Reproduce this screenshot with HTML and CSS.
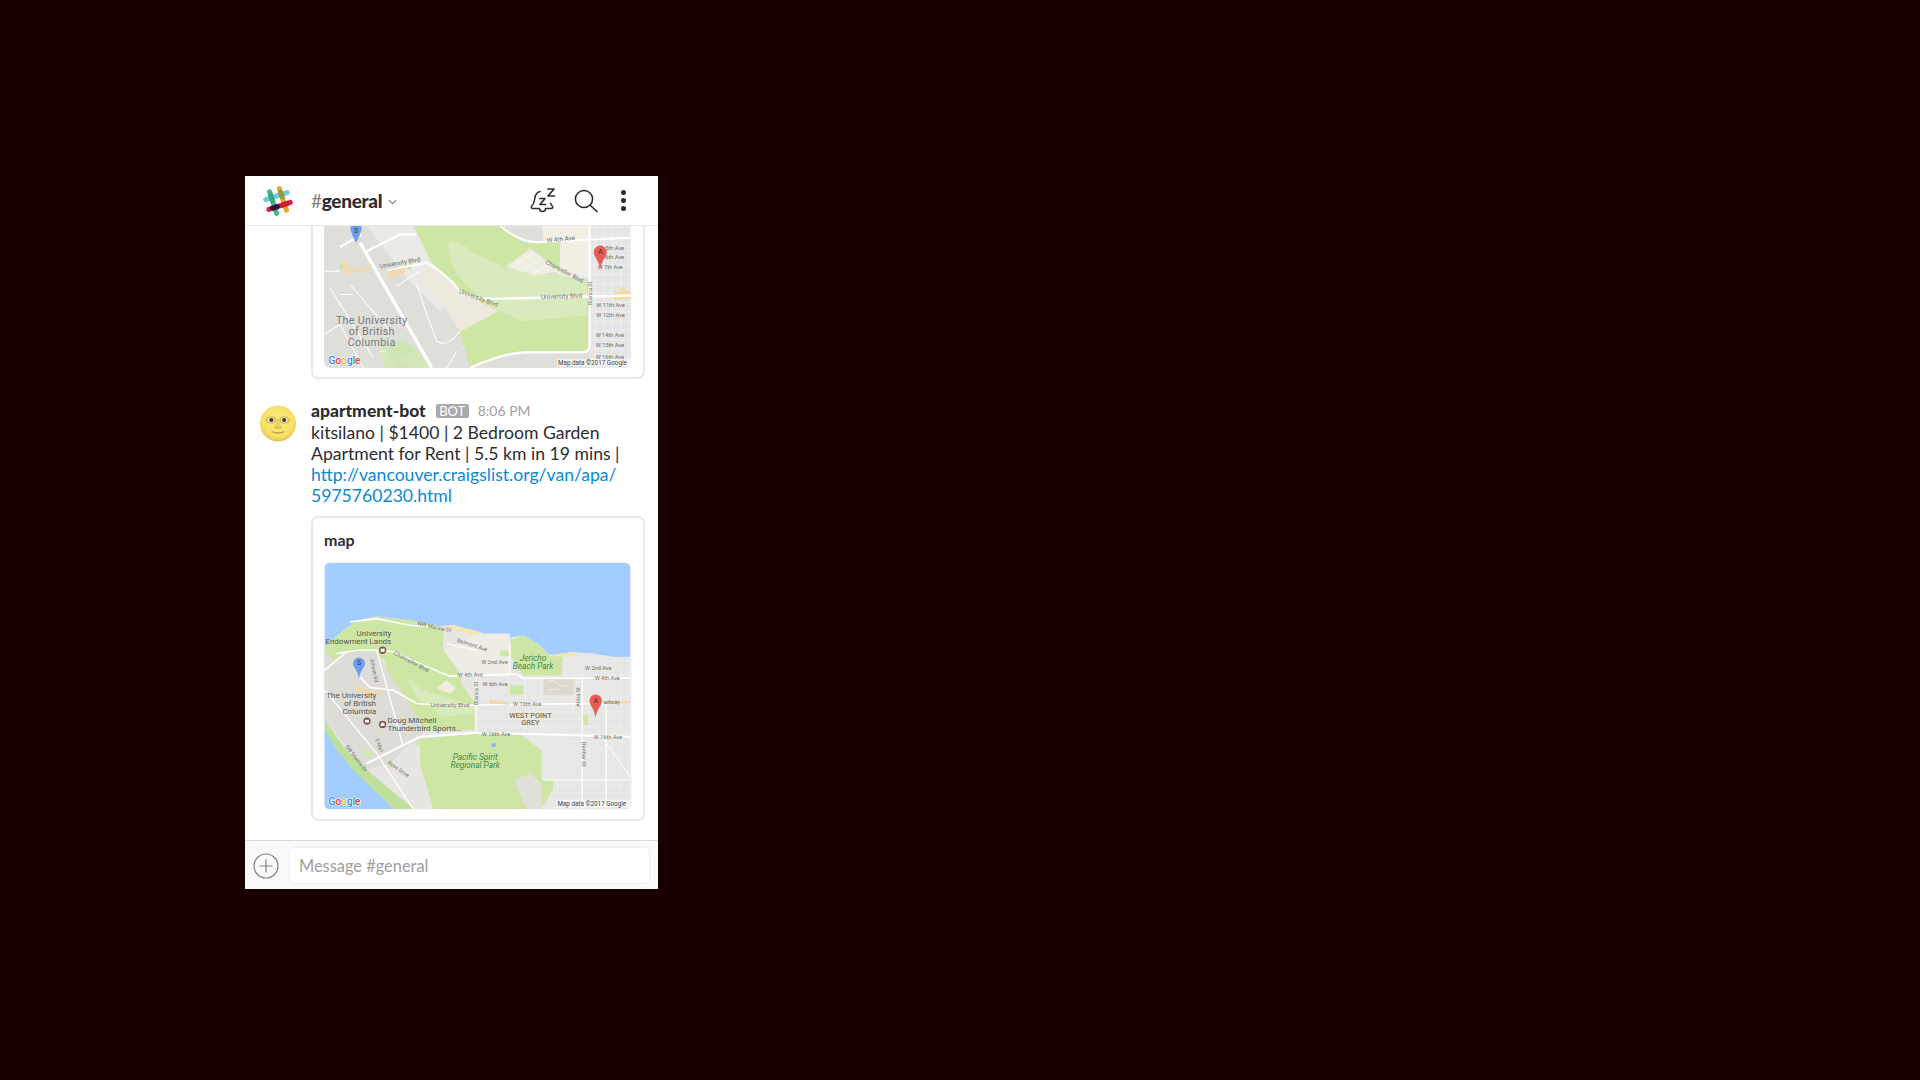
FILE: index.html
```html
<!DOCTYPE html>
<html lang="en">
<head>
  <meta charset="UTF-8">
  <title>#general</title>
  <link rel="stylesheet" href="styles.css">
</head>
<body>
  <div class="phone">
    <header class="topbar">
      <svg class="logo" viewBox="0 0 32 32" aria-hidden="true">
        <g transform="rotate(-18 16 16)" fill="none" stroke-width="5.4" stroke-linecap="round">
          <path d="M10.5 4v24" stroke="#3eb890"/>
          <path d="M21.5 4v24" stroke="#e8a723"/>
          <path d="M4 10.5h24" stroke="#70cadb"/>
          <path d="M4 21.5h24" stroke="#e01765"/>
          <path d="M10.5 7.8v5.4" stroke="#3aa583"/>
          <path d="M21.5 7.8v5.4" stroke="#8f9f3f"/>
          <path d="M8 21.5h5.4" stroke="#33143b"/>
          <path d="M19 21.5h5.4" stroke="#cc1f27"/>
        </g>
      </svg>
      <div class="channel"><span class="hash">#</span><b>general</b>
        <svg class="caret" viewBox="0 0 10 6"><path d="M1 1l4 4 4-4" fill="none" stroke="#777" stroke-width="1.2"/></svg>
      </div>
      <svg class="icon-snooze" viewBox="0 0 28 28" aria-hidden="true">
        <g fill="none" stroke="#2c2d30" stroke-width="1.5" stroke-linejoin="round" stroke-linecap="round">
          <path d="M10 4.500C6 5.500 5 8.500 4.700 12c-.3 3.500-1.200 5.500-3.200 7.500-.6.800-.2 2 1 2h7c0 4 6 4 6 0H21c1.800 0 2.400-1.300 1.200-2.600-.7-.8-1.300-1.600-1.700-2.600"/>
          <path d="M10 11.500h5l-5 6h5.500" stroke-width="1.700"/>
          <path d="M18 2h6l-6 7h6.500" stroke-width="1.700"/>
        </g>
      </svg>
      <svg class="icon-search" viewBox="0 0 24 24" aria-hidden="true">
        <circle cx="10" cy="10" r="8.600" fill="none" stroke="#2c2d30" stroke-width="1.500"/>
        <path d="M16.200 16.200l6.800 6.400" stroke="#2c2d30" stroke-width="1.500" stroke-linecap="round"/>
      </svg>
      <div class="dots"><i></i><i></i><i></i></div>
    </header>

    <main class="messages">
      <div class="card card-cut">
        <svg class="map map-top" viewBox="252 165 920 425" aria-hidden="true">
          <defs>
            <pattern id="blocks" width="26" height="28" patternUnits="userSpaceOnUse">
              <rect width="26" height="28" fill="#e5e5e5"/>
              <path d="M0 .8h26M25 0v28" stroke="#f5f5f5" stroke-width="2"/>
            </pattern>
          </defs>
          <rect x="252" y="165" width="920" height="425" fill="#dfdfda"/>
          <path d="M380 165H520L575 270 660 360 600 420 500 320Z" fill="#e9e9e6"/>
          <path d="M560 272L660 356 775 420 660 482 610 400 530 330Z" fill="#eee9df"/>
          <path d="M905 165H1050V320H960L915 250Z" fill="#f1eee4"/>
          <path d="M520 165H780L850 215H915L958 210 960 300 880 235 798 285 960 312 1044 335V535Q1044 543 1030 543H860Q790 545 690 590L660 482 775 420 660 358 572 270Z" fill="#cde6a4"/>
          <path d="M625 215Q650 200 700 245L800 290 960 312 1040 340V432L850 450 775 420 680 345Q620 280 625 215Z" fill="#d9ebbc"/>
          <path d="M798 287L870 232 958 300 885 312Z" fill="#efeee2"/>
          <path d="M820 285L880 245M850 295L900 262M880 305L925 280" stroke="#fff" stroke-width="2"/>
          <rect x="1048" y="165" width="124" height="425" fill="url(#blocks)"/>
          <path d="M1120 360h52v26h-52zM1140 348h14v12h-14z" fill="#f3d9a8"/>
          <path d="M430 590L420 520H520L575 590Z" fill="#d5e6bc"/>
          <g fill="none" stroke="#fff">
            <path d="M360 215L575 590" stroke-width="10"/>
            <path d="M300 228L365 190M380 240L480 190 530 190M440 300L560 275Q620 310 660 360 700 385 760 383L1172 373" stroke-width="7"/>
            <path d="M780 165Q840 215 900 213L1172 200" stroke-width="6"/>
            <path d="M690 590Q790 545 860 543H1030Q1048 543 1048 520V165" stroke-width="7"/>
            <path d="M252 300H300M270 350L400 560M340 370H300M330 340L450 480M252 490L300 460 370 590M530 340L560 430 590 510Q620 530 650 490L660 480M470 345L540 300M620 590L650 540M420 540H520" stroke-width="3"/>
          </g>
          <path d="M300 270h20l10 25 65-15v10l-70 20H310zM440 300l60-12-10 20-40 18z" fill="#f0d9b5"/>
          <path d="M500 292l15-10-5 14zM295 290l10-10 5 12z" fill="#bfe096"/>
          <path d="M430 530l60-25 35 35-60 35zM470 575h40v15h-40z" fill="#cfe5b5"/>
          <g class="road-text">
            <text x="420" y="292" transform="rotate(-10 420 292)" font-size="19">University Blvd</text>
            <text x="655" y="365" transform="rotate(20 655 365)" font-size="19">University Blvd</text>
            <text x="902" y="384" transform="rotate(-2 902 384)" font-size="19">University Blvd</text>
            <text x="920" y="215" transform="rotate(-6 920 215)" font-size="19">W 4th Ave</text>
            <text x="915" y="277" transform="rotate(28 915 277)" font-size="18">Chancellor Blvd</text>
            <text x="1055" y="402" transform="rotate(-90 1055 402)" font-size="17">Blanca St</text>
            <text x="1095" y="237" font-size="17">5th Ave</text>
            <text x="1095" y="265" font-size="17">6th Ave</text>
            <text x="1072" y="293" font-size="17">W 7th Ave</text>
            <text x="1068" y="408" font-size="17">W 11th Ave</text>
            <text x="1068" y="438" font-size="17">W 12th Ave</text>
            <text x="1066" y="497" font-size="17">W 14th Ave</text>
            <text x="1066" y="527" font-size="17">W 15th Ave</text>
            <text x="1066" y="562" font-size="17">W 16th Ave</text>
          </g>
          <g class="campus-text" font-size="32" text-anchor="middle">
            <text x="395" y="458">The University</text>
            <text x="395" y="491">of British</text>
            <text x="395" y="524">Columbia</text>
          </g>
          <path d="M331 178a17 17 0 1 1 34 0q-2 14-17 42-15-28-17-42z" transform="translate(0 -5)" fill="#6d9eee"/>
          <text x="348" y="185" class="pin-text" font-size="19">S</text>
          <path d="M1061 243a19 19 0 1 1 38 0c0 14-14 22-19 48-5-26-19-34-19-48z" fill="#ea5b55" stroke="#c94540" stroke-width="1"/>
          <text x="1080" y="250" class="pin-text" font-size="22">A</text>
          <text x="265" y="578" class="google" font-size="32"><tspan fill="#4285f4">G</tspan><tspan fill="#ea4335">o</tspan><tspan fill="#fbbc05">o</tspan><tspan fill="#4285f4">g</tspan><tspan fill="#34a853">l</tspan><tspan fill="#ea4335">e</tspan></text>
          <rect x="950" y="564" width="222" height="22" fill="#fff" fill-opacity=".6"/>
          <text x="953" y="581" class="attr" font-size="19">Map data ©2017 Google</text>
        </svg>
      </div>

      <article class="message">
        <svg class="avatar" viewBox="0 0 36 37" aria-hidden="true">
          <defs>
            <radialGradient id="moon" cx="50%" cy="42%" r="58%">
              <stop offset="0" stop-color="#fbeb85"/>
              <stop offset=".75" stop-color="#f6e166"/>
              <stop offset="1" stop-color="#e3c452"/>
            </radialGradient>
          </defs>
          <circle cx="18" cy="18.500" r="18" fill="url(#moon)"/>
          <ellipse cx="11" cy="15" rx="5.500" ry="3.800" fill="#d9c25c"/>
          <ellipse cx="24.500" cy="15" rx="5.500" ry="3.800" fill="#d9c25c"/>
          <ellipse cx="11" cy="15" rx="3.300" ry="2.300" fill="#efe9c8"/>
          <ellipse cx="24.500" cy="15" rx="3.300" ry="2.300" fill="#efe9c8"/>
          <circle cx="11.300" cy="15" r="2" fill="#3c383c"/>
          <circle cx="24.200" cy="15" r="2" fill="#3c383c"/>
          <path d="M16.500 14q-.5 6-2.500 8 4 2.500 8 0-2-2-2.500-8" fill="#ecd35c"/>
          <path d="M14 22q4 2.500 8 0" fill="none" stroke="#c4a73f" stroke-width="1"/>
          <path d="M11.500 26.500q6.500 3 13 0" fill="none" stroke="#bf9f3a" stroke-width="1.300"/>
        </svg>
        <div class="body">
          <div class="meta">
            <span class="author">apartment-bot</span>
            <span class="badge">BOT</span>
            <span class="time">8:06 PM</span>
          </div>
          <p class="text">kitsilano | $1400 | 2 Bedroom Garden<br>Apartment for Rent | 5.5 km in 19 mins |<br><a href="#">http://vancouver.craigslist.org/van/apa/<br>5975760230.html</a></p>
          <div class="card">
            <h2 class="card-title">map</h2>
            <svg class="map map-full" viewBox="44 38 918 739" aria-hidden="true">
              <defs>
                <pattern id="grid" width="24" height="22" patternUnits="userSpaceOnUse">
                  <rect width="24" height="22" fill="#e6e6e4"/>
                  <path d="M0 .8h24M23 0v22" stroke="#f3f3f3" stroke-width="1.800"/>
                </pattern>
              </defs>
              <rect x="44" y="38" width="918" height="739" fill="#a3ccff"/>
              <path d="M44 290L100 240 140 212 200 198 300 210 380 228 430 224 470 235 510 245 550 268 600 262 640 255 690 285 720 315 790 305 850 310 962 328V777H310L170 660 100 590 44 515Z" fill="#e7e6e2"/>
              <path d="M400 228L430 224 470 235 510 245 550 270 600 264 600 274 550 280 500 258 440 240Z" fill="#f3e6b4"/>
              <path d="M710 316L790 306 800 316 730 326Z" fill="#f3e6b4"/>
              <path d="M500 250H600V380H500L460 370 400 300Z" fill="#efece5"/>
              <rect x="500" y="380" width="462" height="397" fill="url(#grid)"/>
              <rect x="760" y="320" width="202" height="60" fill="url(#grid)"/>
              <path d="M44 290L100 240 140 212 200 198 300 210 400 228 400 300 450 370 455 400 495 460V540H340L325 590 240 490 225 330 190 305H100L80 335 44 310Z" fill="#cde6a4"/>
              <path d="M604 268L640 255 690 285 720 318 760 320 755 376 640 376 604 320Z" fill="#cde6a4"/>
              <path d="M290 380L340 420 440 450 495 465V490L400 500 320 440Z" fill="#d9ebbc"/>
              <path d="M380 415L410 390 440 415 420 430Z" fill="#efeee2"/>
              <path d="M44 310L80 335 100 305H200L225 350 300 460 340 540 325 580 300 580 240 640 170 660 44 510Z" fill="#dddcd7"/>
              <path d="M44 510L100 590 170 660 310 777H250L130 660 80 600 44 540Z" fill="#bfe09a"/>
              <path d="M44 540L80 600 130 660 250 777H44Z" fill="#a3ccff"/>
              <path d="M330 565L500 552H630L695 600V690H730V718L695 777H370L330 640Z" fill="#cde6a4"/>
              <path d="M612 690L660 670 695 700V777H650Z" fill="#dfe1d8"/>
              <path d="M814 495h22v30h-10zM600 405h40v28h-40zM570 300h28v18h-28z" fill="#cde6a4"/>
              <rect x="702" y="384" width="90" height="50" fill="#dcd8cc"/>
              <path d="M712 395q20-8 30 5t30 5M715 420q20-8 40 0" fill="none" stroke="#efece5" stroke-width="3"/>
              <rect x="545" y="580" width="14" height="10" fill="#86b8f5"/>
              <g fill="none" stroke="#fff">
                <path d="M120 215L200 205 300 225 400 232M80 310L140 300H215L250 305 340 345 420 378 620 372 640 385 962 383" stroke-width="5"/>
                <path d="M44 360L110 305M150 380L180 412 250 420 320 460 400 466 962 458" stroke-width="5"/>
                <path d="M170 640L330 560 500 548 962 560" stroke-width="6"/>
                <path d="M200 300L280 590M44 420L200 610 310 777" stroke-width="4"/>
                <path d="M498 380V548M818 380V777M890 460V777M700 690H962M600 280V372M410 280L500 300M870 550L962 680" stroke-width="3"/>
              </g>
              <path d="M120 410l40 5 30 10 15-5 15 8-30 8-45-12zM540 450l60 8v6l-60-4zM880 453h82v8H880z" fill="#f2d9a8"/>
              <path d="M200 540l15 5-5 12zM160 590l30 20-10 20-25-25zM230 640l15 5-5 15z" fill="#d3e6b8"/>
              <g class="road-text">
                <text x="322" y="225" transform="rotate(12 322 225)" font-size="17">NW Marine Dr</text>
                <text x="440" y="275" transform="rotate(18 440 275)" font-size="17">Belmont Ave</text>
                <text x="250" y="312" transform="rotate(28 250 312)" font-size="17">Chancellor Blvd</text>
                <text x="514" y="342" font-size="17">W 2nd Ave</text>
                <text x="826" y="358" font-size="17">W 2nd Ave</text>
                <text x="444" y="381" transform="rotate(-2 444 381)" font-size="17">W 4th Ave</text>
                <text x="855" y="390" font-size="17">W 4th Ave</text>
                <text x="518" y="408" font-size="17">W 6th Ave</text>
                <text x="362" y="470" font-size="18">University Blvd</text>
                <text x="610" y="468" font-size="17">W 10th Ave</text>
                <text x="516" y="558" font-size="17">W 16th Ave</text>
                <text x="852" y="567" font-size="17">W 16th Ave</text>
                <text x="505" y="465" transform="rotate(-90 505 465)" font-size="17">Blanca St</text>
                <text x="810" y="470" transform="rotate(-90 810 470)" font-size="17">Alma St</text>
                <text x="817" y="575" transform="rotate(90 817 575)" font-size="17">Dunbar St</text>
                <text x="180" y="328" transform="rotate(78 180 328)" font-size="16">Allison Rd</text>
                <text x="195" y="568" transform="rotate(68 195 568)" font-size="16">E Mall</text>
                <text x="105" y="590" transform="rotate(52 105 590)" font-size="16">SW Marine Dr</text>
                <text x="232" y="640" transform="rotate(35 232 640)" font-size="16">Ross Drive</text>
                <text x="882" y="461" font-size="17">adway</text>
              </g>
              <g class="place-text" font-size="24">
                <text x="192" y="256" text-anchor="middle">University</text>
                <text x="145" y="280" text-anchor="middle">Endowment Lands</text>
                <text x="124" y="445" text-anchor="middle">The University</text>
                <text x="150" y="469" text-anchor="middle">of British</text>
                <text x="148" y="493" text-anchor="middle">Columbia</text>
                <text x="233" y="519">Doug Mitchell</text>
                <text x="233" y="543">Thunderbird Sports...</text>
              </g>
              <g class="district-text" font-size="22" text-anchor="middle">
                <text x="662" y="504">WEST POINT</text>
                <text x="662" y="526">GREY</text>
              </g>
              <g class="park-text" font-size="25" text-anchor="middle">
                <text x="670" y="331">Jericho</text>
                <text x="670" y="355">Beach Park</text>
                <text x="496" y="629">Pacific Spirit</text>
                <text x="496" y="653">Regional Park</text>
              </g>
              <g fill="#7a5a50">
                <circle cx="218" cy="300" r="11"/>
                <circle cx="171" cy="513" r="11"/>
                <circle cx="218" cy="523" r="11"/>
              </g>
              <g fill="#fff">
                <rect x="212" y="295" width="12" height="10"/>
                <rect x="165" y="509" width="12" height="8"/>
                <path d="M218 516l6 6v6h-12v-6z"/>
              </g>
              <path d="M129 340a18 18 0 1 1 36 0c0 12-13 18-18 44-5-26-18-32-18-44z" fill="#6d9eee"/>
              <text x="147" y="343" class="pin-text" font-size="21">S</text>
              <path d="M840 452a18 18 0 1 1 36 0c0 14-13 20-18 48-5-28-18-34-18-48z" fill="#ea5b55" stroke="#c94540" stroke-width="1"/>
              <text x="858" y="458" class="pin-text" font-size="21">A</text>
              <text x="55" y="765" class="google" font-size="32"><tspan fill="#4285f4">G</tspan><tspan fill="#ea4335">o</tspan><tspan fill="#fbbc05">o</tspan><tspan fill="#4285f4">g</tspan><tspan fill="#34a853">l</tspan><tspan fill="#ea4335">e</tspan></text>
              <rect x="740" y="750" width="222" height="22" fill="#fff" fill-opacity=".6"/>
              <text x="743" y="767" class="attr" font-size="19">Map data ©2017 Google</text>
            </svg>
          </div>
        </div>
      </article>
    </main>

    <footer class="composer">
      <svg class="plus" viewBox="0 0 26 26" aria-hidden="true">
        <circle cx="13" cy="13" r="12" fill="none" stroke="#7d7f87" stroke-width="1.200"/>
        <path d="M13 6.500v13M6.500 13h13" stroke="#7d7f87" stroke-width="1.200"/>
      </svg>
      <div class="input">Message #general</div>
    </footer>
  </div>
</body>
</html>
```

FILE: styles.css
```css
body {
  margin: 0;
  height: 1080px;
  box-sizing: border-box;
  padding: 176px 0 0 245px;
  background: #190000;
  font-family: 'Lato', sans-serif;
  color: #2c2d30;
  overflow: hidden;
}

.phone {
  width: 413px;
  height: 713px;
  display: flex;
  flex-direction: column;
  background: #fff;
}

/* top bar */
.topbar {
  height: 50px;
  box-sizing: border-box;
  display: flex;
  align-items: center;
  padding-left: 18px;
  border-bottom: 1px solid #e8e8e8;
  flex-shrink: 0;
}
.logo {
  width: 30px;
  height: 30px;
}
.channel {
  margin-left: 18px;
  font-size: 19px;
  letter-spacing: -0.3px;
  display: flex;
  align-items: center;
}
.channel b {
  font-weight: 900;
}
.hash {
  color: #808085;
}
.caret {
  width: 9px;
  height: 6px;
  margin: 2px 0 0 6px;
}
.icon-snooze {
  width: 28px;
  height: 28px;
  margin-left: auto;
}
.icon-search {
  width: 24px;
  height: 24px;
  margin-left: 15.5px;
}
.dots {
  display: flex;
  flex-direction: column;
  gap: 3px;
  margin: 0 32.5px 0 23px;
}
.dots i {
  width: 5px;
  height: 5px;
  border-radius: 50%;
  background: #2c2d30;
}

/* message list */
.messages {
  flex: 1;
  overflow: hidden;
  display: flex;
  flex-direction: column;
}
.card {
  box-sizing: border-box;
  width: 334px;
  padding: 0 11px 10px;
  border: 2px solid #e8e8e8;
  border-radius: 7px;
  background: #fff;
}
.card-cut {
  margin-left: 66px;
  height: 153px;
  border-top: 0;
  border-radius: 0 0 7px 7px;
}
.map {
  display: block;
  width: 307px;
  border-radius: 6px;
}
.map-top {
  height: 142px;
  border-radius: 0 0 6px 6px;
}
.map-full {
  height: 246px;
  box-shadow: 0 0 1px #bbb;
}
.message {
  display: flex;
  margin-top: 21px;
  padding-left: 15px;
}
.avatar {
  width: 36px;
  height: 37px;
  margin-top: 5px;
  flex-shrink: 0;
}
.body {
  margin-left: 15px;
}
.meta {
  display: flex;
  align-items: center;
  height: 21px;
  padding-bottom: 1px;
}
.author {
  font-weight: 900;
  font-size: 17.5px;
}
.badge {
  margin-left: 10px;
  width: 33px;
  height: 14px;
  line-height: 14px;
  text-align: center;
  font-size: 13px;
  border-radius: 2px;
  background: #aaa;
  color: #fff;
}
.time {
  margin-left: 9px;
  font-size: 14px;
  color: #a0a0a2;
}
.text {
  margin: 0 0 10px;
  font-size: 17.6px;
  line-height: 21px;
}
.text a {
  color: #0b8ad3;
  text-decoration: none;
}
.card-title {
  margin: 0;
  padding: 11px 0 13px;
  font-size: 16px;
  line-height: 21px;
  font-weight: 700;
}

/* map labels */
.road-text text {
  font-family: 'Roboto', sans-serif;
  fill: #70706c;
}
.campus-text text {
  font-family: 'Roboto', sans-serif;
  fill: #77777a;
  letter-spacing: 1px;
}
.place-text text {
  font-family: 'Roboto', sans-serif;
  fill: #55554f;
}
.district-text text {
  font-family: 'Roboto', sans-serif;
  font-weight: 500;
  fill: #83714f;
}
.park-text text {
  font-family: 'Roboto', sans-serif;
  font-style: italic;
  fill: #3f8a45;
}
.pin-text {
  font-family: 'Roboto', sans-serif;
  fill: #333;
  text-anchor: middle;
}
.google {
  font-family: 'Roboto', sans-serif;
  font-weight: 500;
  letter-spacing: -1px;
  stroke: #fff;
  stroke-width: 3px;
  paint-order: stroke;
}
.attr {
  font-family: 'Roboto', sans-serif;
  fill: #444;
}

/* composer */
.composer {
  height: 49px;
  box-sizing: border-box;
  flex-shrink: 0;
  display: flex;
  align-items: center;
  padding: 1px 8px 0;
  background: #f9f9f9;
  border-top: 1px solid #d9d9d9;
}
.plus {
  width: 26px;
  height: 26px;
}
.input {
  flex: 1;
  height: 37px;
  line-height: 36px;
  box-sizing: border-box;
  margin-left: 10px;
  padding-left: 9px;
  font-size: 16.4px;
  color: #a0a0a2;
  background: #fff;
  border: 1px solid #eee;
  border-radius: 5px;
}
```
